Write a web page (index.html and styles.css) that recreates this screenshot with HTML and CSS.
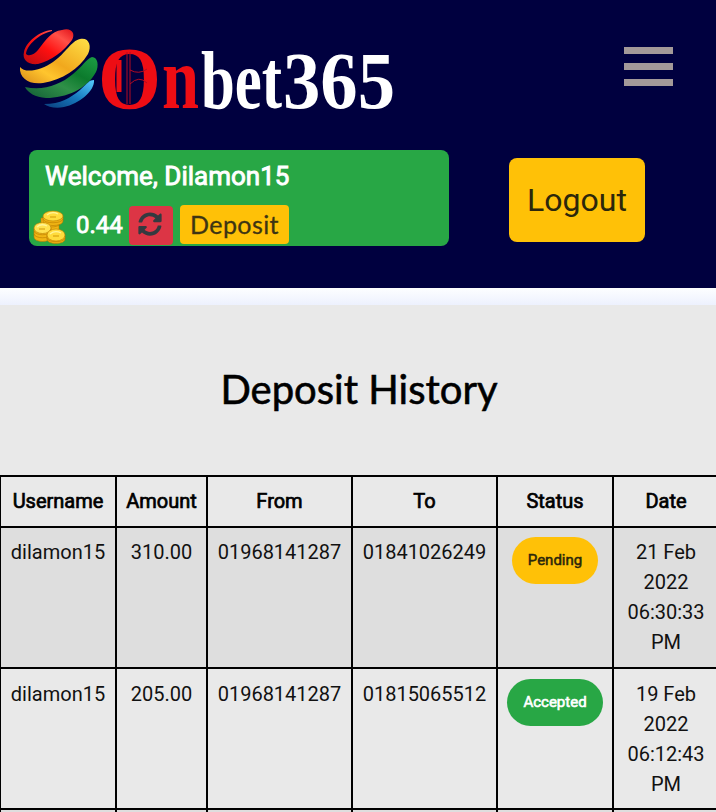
FILE: index.html
```html
<!DOCTYPE html>
<html lang="en">
<head>
<meta charset="utf-8">
<title>Deposit History</title>
<link rel="stylesheet" href="styles.css">
</head>
<body>
<header class="header">
  <div class="topbar">
    <svg class="logo" width="378" height="100" viewBox="18 27 378 100" role="img" aria-label="Onbet365">
      <defs>
        <linearGradient id="red" x1="0" y1="1" x2="1" y2="0"><stop offset="0" stop-color="#b80b12"/><stop offset=".45" stop-color="#ff1010"/><stop offset=".75" stop-color="#ff5048"/><stop offset="1" stop-color="#e01018"/></linearGradient>
        <linearGradient id="yellow" x1="0" y1="1" x2="1" y2="0"><stop offset="0" stop-color="#d98b18"/><stop offset=".3" stop-color="#ffc52e"/><stop offset=".5" stop-color="#f1a81d"/><stop offset="1" stop-color="#ffe148"/></linearGradient>
        <linearGradient id="green" x1="0" y1="1" x2="1" y2="0"><stop offset="0" stop-color="#125c36"/><stop offset=".4" stop-color="#2f9048"/><stop offset=".65" stop-color="#0c7a2c"/><stop offset="1" stop-color="#1c9d45"/></linearGradient>
        <linearGradient id="blue" x1="0" y1="1" x2="1" y2="0"><stop offset="0" stop-color="#0a3c7c"/><stop offset=".5" stop-color="#1679bd"/><stop offset="1" stop-color="#55cbff"/></linearGradient>
      </defs>
      <path fill="url(#red)" d="M52 31C39 34 27 45 26 54C29 57 35 54 38 50C46 40 51 31 62 30C71 27 76 33 72 40C64 51 51 61 38 64C28 65 22 60 24 52C26 42 39 31 52 30Z"/>
      <path fill="url(#yellow)" d="M20 67C25 74 42 70 53 62C66 53 71 41 80 39C89 37 92 46 88 54C79 69 62 80 43 83C29 85 19 78 20 67Z"/>
      <path fill="url(#green)" d="M25 87C43 91 60 85 73 74C83 66 86 59 92 57C98 57 99 66 96 72C87 89 66 98 46 98C35 97 28 93 25 87Z"/>
      <path fill="url(#blue)" d="M44 104C61 104 70 98 80 90C88 83 89 80 94 80C95 91 79 104 64 107C56 109 48 107 44 104Z"/>
      <g class="logo-text">
        <text class="logo-red" x="98" y="108" font-size="88" textLength="63" lengthAdjust="spacingAndGlyphs">O</text>
        <text class="logo-red" x="162" y="108" font-size="88" textLength="37" lengthAdjust="spacingAndGlyphs">n</text>
        <text class="logo-white" x="201" y="108" font-size="82" textLength="81" lengthAdjust="spacingAndGlyphs">bet</text>
        <text class="logo-white" x="283" y="108" font-size="81" textLength="112" lengthAdjust="spacingAndGlyphs">365</text>
      </g>
      <path class="logo-bar" d="M119 60V92"/>
      <path class="logo-lines" d="M127 52V104M130 52V104M130 70Q139 75 147 69M130 84Q139 75 147 83"/>
    </svg>
    <div class="menu"><i></i><i></i><i></i></div>
  </div>
  <div class="account">
    <section class="card">
      <div class="welcome">Welcome, Dilamon15</div>
      <div class="balance">
        <svg class="coins" width="34" height="36" viewBox="0 0 34 36">
          <g fill="#f0b514" stroke="#b87a00" stroke-width=".6">
            <path d="M8 9v12c0 4 18 4 18 0V9z"/><path d="M10 7v5c0 6 20 6 20 0V7"/><path d="M10 10c1 5 19 5 20 0M9 15c2 4 16 4 18 0" fill="none"/>
            <ellipse cx="20" cy="7" rx="10" ry="5" fill="#ffdc3c"/>
            <path d="M1 19v9c0 6 17 6 17 0v-9z"/><path d="M1 22c1 5 16 5 17 0M1 25c1 5 16 5 17 0" fill="none"/><ellipse cx="9.500" cy="19" rx="8.500" ry="5.500" fill="#ffe250"/>
            <path d="M14 26v4c0 6 18 6 18 0v-4z"/><path d="M14 29c1 5 17 5 18 0" fill="none"/><ellipse cx="23" cy="26" rx="9" ry="6" fill="#ffdc3c"/>
          </g>
          <g fill="none" stroke="#fff49a" stroke-width="1.300"><path d="M14 6q5-4 11-1M4 18q4-4 10-1M17 25q5-4 11-1"/></g>
          <g fill="none" stroke="#d19809" stroke-width="1"><path d="M17 8h6M6 20h6M20 27h6"/></g>
        </svg>
        <span class="amount">0.44</span>
        <span class="refresh"><svg width="24" height="24" viewBox="0 0 512 512"><path fill="#343a40" d="M370.7 133.3C339.500 104 298.900 88 255.800 88c-77.500.1-144.300 53.200-162.800 126.900-1.300 5.400-6.100 9.100-11.700 9.100H24.100c-7.500 0-13.200-6.800-11.800-14.200C33.900 94.900 134.800 8 256 8c66.400 0 126.800 26.100 171.300 68.700L463 41c15.100-15.100 41-4.400 41 17v134c0 13.300-10.700 24-24 24H346c-21.400 0-32.100-25.900-17-41l41.700-41.700zM32 296h134c21.400 0 32.100 25.900 17 41l-41.700 41.700c31.300 29.300 71.800 45.300 114.900 45.300 77.500-.1 144.300-53.200 162.800-126.900 1.300-5.400 6.100-9.100 11.700-9.100h57.300c7.500 0 13.200 6.800 11.800 14.200C478.100 417.100 377.200 504 256 504c-66.400 0-126.800-26.100-171.300-68.700L49 471c-15.100 15.100-41 4.400-41-17V320c0-13.300 10.700-24 24-24z"/></svg></span>
        <span class="deposit">Deposit</span>
      </div>
    </section>
    <span class="logout">Logout</span>
  </div>
</header>
<div class="strip"></div>
<main>
  <h1>Deposit History</h1>
  <table>
    <colgroup><col class="c1"><col class="c2"><col class="c3"><col class="c3"><col class="c1"><col class="c4"></colgroup>
    <thead><tr><th>Username</th><th>Amount</th><th>From</th><th>To</th><th>Status</th><th>Date</th></tr></thead>
    <tbody>
      <tr><td>dilamon15</td><td>310.00</td><td>01968141287</td><td>01841026249</td><td><span class="badge pending">Pending</span></td><td>21 Feb<br>2022<br>06:30:33<br>PM</td></tr>
      <tr class="lower"><td>dilamon15</td><td>205.00</td><td>01968141287</td><td>01815065512</td><td><span class="badge accepted">Accepted</span></td><td>19 Feb<br>2022<br>06:12:43<br>PM</td></tr>
      <tr class="next"><td></td><td></td><td></td><td></td><td></td><td></td></tr>
    </tbody>
  </table>
</main>
</body>
</html>
```
FILE: styles.css
```css
* { box-sizing: border-box; }
html { overflow: hidden; }
body { margin: 0; height: 812px; overflow: hidden; background: #e9e9e9; font-family: Roboto, sans-serif; color: #111; }
.header { height: 288px; background: #00003f; }
.topbar { display: flex; justify-content: space-between; align-items: flex-start; height: 150px; padding: 27px 43px 0 18px; }
.logo { display: block; }
.logo-text { font-family: "Liberation Serif", serif; font-weight: 700; }
.logo-red { fill: #ee0d14; }
.logo-white { fill: #fff; }
.logo-bar { fill: none; stroke: #ee0d14; stroke-width: 5; }
.logo-lines { fill: none; stroke: #b40a22; stroke-width: 1; }
.menu { display: flex; flex-direction: column; gap: 9px; padding-top: 20px; }
.menu i { width: 49px; height: 7px; background: #a39999; }
.account { display: flex; align-items: flex-start; gap: 60px; padding-left: 29px; }
.card { width: 420px; height: 96px; border-radius: 8px; background: #28a745; color: #fff; }
.welcome { height: 55px; padding: 8px 0 0 16px; font-size: 26px; line-height: 36px; -webkit-text-stroke: .9px #fff; white-space: nowrap; }
.balance { display: flex; align-items: flex-start; height: 40px; }
.coins { margin: 4px 0 0 4px; }
.amount { width: 62px; padding-left: 9px; font-size: 24px; line-height: 40px; -webkit-text-stroke: .8px #fff; }
.refresh { display: flex; justify-content: center; width: 44px; height: 39px; margin-top: 1px; padding: 6px 2px 0 0; border-radius: 4px; background: #dc3545; }
.deposit { width: 109px; height: 39px; margin-left: 7px; border-radius: 4px; background: #ffc107; color: #3d3413; font: 25px/39px Lato, sans-serif; letter-spacing: .4px; text-align: center; -webkit-text-stroke: .3px #3d3413; }
.logout { width: 136px; height: 84px; margin-top: 8px; border-radius: 8px; background: #ffc107; color: #2c270b; font-size: 32px; line-height: 84px; text-align: center; }
.strip { height: 17px; background: linear-gradient(#fdfeff, #edf1fe); }
main { width: 716px; height: 507px; overflow: hidden; }
h1 { height: 170px; margin: 0; padding: 59px 0 0 2px; color: #000; font: 400 40px/50px Lato, sans-serif; letter-spacing: 0; text-align: center; -webkit-text-stroke: .6px #000; }
table { width: 719px; margin-left: -1px; table-layout: fixed; border-collapse: collapse; font-size: 20px; line-height: 30px; }
.c1 { width: 116px; } .c2 { width: 91px; } .c3 { width: 145px; } .c4 { width: 106px; }
th, td { height: 141px; padding: 9px 0 0; border: 2px solid #000; text-align: center; vertical-align: top; }
th { height: 51px; color: #000; font-weight: 400; -webkit-text-stroke: .7px #000; }
tbody tr:nth-child(odd) { background: #dedede; }
.lower td { padding-top: 10px; }
.next td { height: 4px; padding: 0; }
.badge { display: block; width: max-content; height: 47px; margin: 0 auto; padding: 0 16px; border-radius: 24px; font-size: 15px; line-height: 46px; }
.pending { background: #ffc107; color: #2c270b; -webkit-text-stroke: .5px #2c270b; }
.accepted { background: #28a745; color: #fff; -webkit-text-stroke: .6px #fff; }
```
